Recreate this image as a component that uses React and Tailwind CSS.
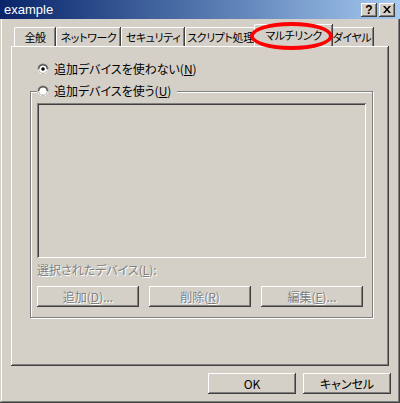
import { useState } from "react";

const FONT = "font-['Noto_Sans_CJK_JP','Noto_Sans',sans-serif] [font-feature-settings:'palt']";
const RAISED =
  "shadow-[inset_-1px_-1px_#404040,inset_1px_1px_#ffffff,inset_-2px_-2px_#808080,inset_2px_2px_#d4d0c8]";
const SUNKEN =
  "shadow-[inset_1px_1px_#808080,inset_-1px_-1px_#ffffff,inset_2px_2px_#404040,inset_-2px_-2px_#d4d0c8]";
const DISABLED_TEXT = "text-[#808080] [text-shadow:1px_1px_0_#ffffff]";

const tabs = [
  { label: "全般", w: "w-[41px]" },
  { label: "ネットワーク", w: "w-[64px]" },
  { label: "セキュリティ", w: "w-[63px]" },
  { label: "スクリプト処理", w: "w-[70px]" },
  { label: "マルチリンク", w: "w-[78px]", active: true },
  { label: "ダイヤル", w: "w-[43px]" },
];

function Radio({ checked, onClick }) {
  return (
    <svg width="12" height="12" viewBox="0 0 12 12" onClick={onClick} className="shrink-0">
      <circle cx="6" cy="6" r="5.5" fill="#808080" />
      <path d="M11.5 6A5.5 5.5 0 0 1 6 11.5 5.5 5.5 0 0 1 .5 6" fill="#ffffff" />
      <circle cx="6" cy="6" r="4.5" fill="#404040" />
      <path d="M10.5 6A4.5 4.5 0 0 1 6 10.5 4.5 4.5 0 0 1 1.5 6" fill="#d4d0c8" />
      <circle cx="6" cy="6" r="3.6" fill="#ffffff" />
      {checked && <circle cx="6" cy="6" r="1.8" fill="#000000" />}
    </svg>
  );
}

function Btn({ children, disabled, className = "" }) {
  return (
    <button
      className={`h-[21px] bg-[#d4d0c8] text-[12px] leading-none whitespace-nowrap ${RAISED} ${
        disabled ? DISABLED_TEXT : "text-black"
      } ${className}`}
    >
      {children}
    </button>
  );
}

export default function App() {
  const [useDevices, setUseDevices] = useState(false);

  return (
    <div
      className={`relative w-[400px] h-[403px] bg-[#d4d0c8] ${FONT} text-black overflow-hidden shadow-[inset_-1px_-1px_#404040,inset_1px_1px_#d4d0c8,inset_-2px_-2px_#808080,inset_2px_2px_#ffffff]`}
    >
      {/* title bar */}
      <div className="h-[19px] flex items-center justify-between bg-gradient-to-r from-[#0a246a] to-[#a6caf0] pl-[4px] pr-[5px]">
        <span className="text-white text-[13px] font-['Liberation_Sans',sans-serif] leading-none">example</span>
        <div className="flex gap-[2px]">
          <div className={`w-[16px] h-[14px] bg-[#d4d0c8] ${RAISED} flex items-center justify-center text-[12px] font-bold font-['Liberation_Sans',sans-serif] leading-none`}>
            ?
          </div>
          <div className={`w-[16px] h-[14px] bg-[#d4d0c8] ${RAISED} flex items-center justify-center`}>
            <svg width="8" height="7" viewBox="0 0 8 7">
              <path d="M0 0h2l2 2.5L6 0h2L5 3.5 8 7H6L4 4.5 2 7H0l3-3.5z" fill="#000" />
            </svg>
          </div>
        </div>
      </div>

      {/* tabs */}
      <div className="flex items-end pl-[14px] mt-[6px] h-[21px]">
        {tabs.map((t) =>
          t.active ? (
            <div
              key={t.label}
              className={`${t.w} -mx-[2px] h-[22px] relative z-10 bg-[#d4d0c8] border-l border-t border-white rounded-tl-[2px] shadow-[inset_-1px_0_#808080,1px_0_#404040] flex items-start justify-center pt-[3px] text-[11px] tracking-[-0.4px] leading-[14px] whitespace-nowrap`}
            >
              {t.label}
            </div>
          ) : (
            <div
              key={t.label}
              className={`${t.w} h-[19px] bg-[#d4d0c8] border-l border-t border-white rounded-tl-[2px] shadow-[inset_-1px_0_#808080,1px_0_#404040] flex items-center justify-center text-[11px] tracking-[-0.4px] leading-[14px] whitespace-nowrap mr-[1px]`}
            >
              {t.label}
            </div>
          )
        )}
      </div>

      {/* tab panel */}
      <div className={`ml-[11px] w-[378px] h-[320px] ${RAISED} pt-[16px] pl-[26px] pr-[15px]`}>
        <label className="flex items-center gap-[5px] h-[14px] text-[12px] leading-none" onClick={() => setUseDevices(false)}>
          <Radio checked={!useDevices} />
          <span>
            追加デバイスを使わない(<span className="underline">N</span>)
          </span>
        </label>

        <div className="-ml-[7px] mt-[15px] w-[343px] h-[227px] border border-[#808080] shadow-[inset_1px_1px_#ffffff,1px_1px_#ffffff] px-[6px]">
          <label
            className="-mt-[8px] w-fit flex items-center gap-[5px] h-[14px] pr-[6px] bg-[#d4d0c8] text-[12px] leading-none"
            onClick={() => setUseDevices(true)}
          >
            <Radio checked={useDevices} />
            <span>
              追加デバイスを使う(<span className="underline">U</span>)
            </span>
          </label>

          <div className={`mt-[5px] h-[155px] bg-[#d4d0c8] ${SUNKEN}`} />

          <div className={`mt-[6px] h-[14px] text-[12px] leading-none ${DISABLED_TEXT}`}>
            選択されたデバイス(<span className="underline">L</span>):
          </div>

          <div className="mt-[8px] flex justify-between pr-[3px]">
            <Btn disabled className="w-[102px]">
              追加(<span className="underline">D</span>)...
            </Btn>
            <Btn disabled className="w-[102px]">
              削除(<span className="underline">R</span>)
            </Btn>
            <Btn disabled className="w-[102px]">
              編集(<span className="underline">E</span>)...
            </Btn>
          </div>
        </div>
      </div>

      {/* dialog buttons */}
      <div className="flex justify-end gap-[7px] pr-[9px] mt-[7px]">
        <Btn className="w-[88px]">OK</Btn>
        <Btn className="w-[88px]">キャンセル</Btn>
      </div>

      {/* red highlight ellipse */}
      <div className="absolute left-[250px] top-[22px] w-[83px] h-[28px] rounded-[50%] border-[4px] border-[#ff0000] z-20 pointer-events-none" />
    </div>
  );
}
